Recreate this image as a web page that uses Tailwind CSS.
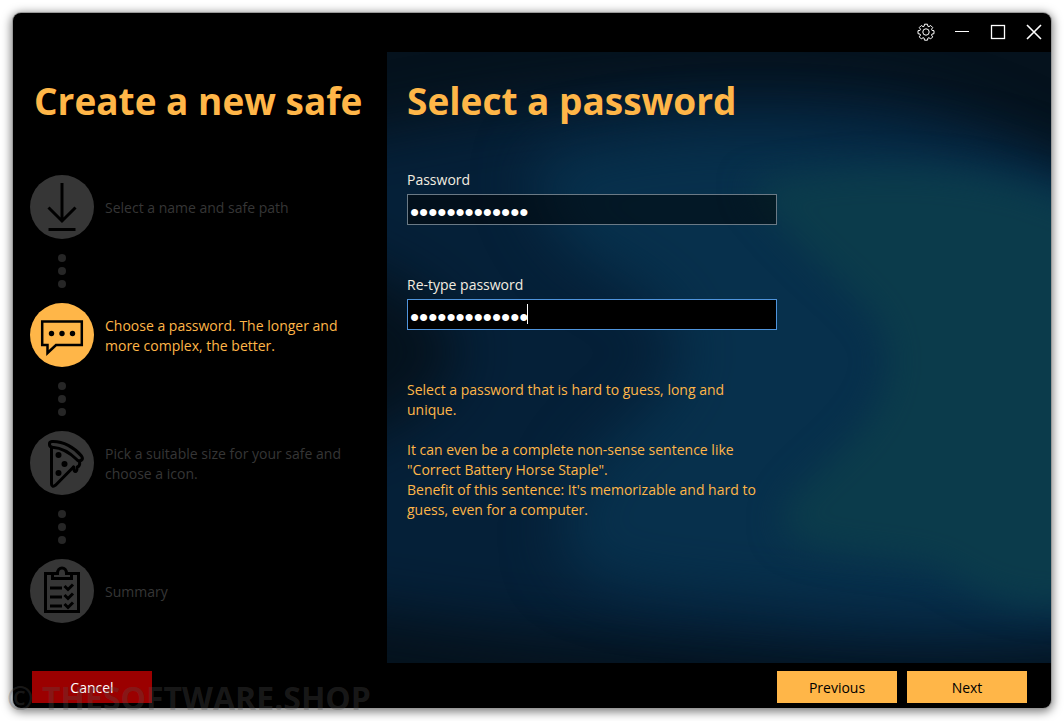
<!DOCTYPE html>
<html lang="en">
<head>
  <meta charset="UTF-8" />
  <meta name="viewport" content="width=device-width, initial-scale=1.0" />
  <title>Create a new safe</title>
  <script src="https://cdn.jsdelivr.net/npm/@tailwindcss/browser@4"></script>
</head>
<body class="bg-white p-[13px] min-h-screen flex font-['Segoe_UI','Open_Sans',sans-serif] text-[14px] leading-5">
  <div class="relative flex-1 flex flex-col bg-black rounded-lg shadow-[0_0_0_1px_#999,0_2px_10px_2px_rgba(0,0,0,0.5)]">

    <!-- Title bar -->
    <header class="h-[39px] flex items-center justify-end gap-4 pr-[7px] pb-[2px] text-white">
      <button type="button" aria-label="Settings" class="w-5 h-5 flex items-center justify-center">
        <svg class="w-[18px] h-[18px]" viewBox="0 0 18 18" fill="none" stroke="currentColor" stroke-width="1" stroke-linejoin="round">
          <path d="M7.5 1.2h3l.4 2.1 1 .4 1.800-1.200 2 2-1.200 1.800.4 1 2.100.4v3l-2.100.4-.4 1 1.200 1.800-2 2-1.800-1.200-1 .4-.4 2.100h-3l-.4-2.100-1-.4-1.800 1.200-2-2 1.200-1.800-.4-1L1 10.700v-3l2.100-.4.4-1-1.200-1.800 2-2 1.800 1.200 1-.4z" />
          <circle cx="9" cy="9" r="3.200" />
        </svg>
      </button>
      <button type="button" aria-label="Minimize" class="w-5 h-5 flex items-center justify-center">
        <svg class="w-4 h-4" viewBox="0 0 16 16" stroke="currentColor"><path d="M1 7.500h14" /></svg>
      </button>
      <button type="button" aria-label="Maximize" class="w-5 h-5 flex items-center justify-center">
        <svg class="w-4 h-4" viewBox="0 0 16 16" fill="none" stroke="currentColor" stroke-width="1.300"><rect x="1.500" y="1.500" width="13" height="13" /></svg>
      </button>
      <button type="button" aria-label="Close" class="w-5 h-5 flex items-center justify-center">
        <svg class="w-4 h-4" viewBox="0 0 16 16" stroke="currentColor" stroke-width="1.600"><path d="M1 1l14 14M15 1L1 15" /></svg>
      </button>
    </header>

    <div class="flex-1 flex">
      <!-- Steps -->
      <aside class="w-[374px] shrink-0 text-[#363636] pt-[22px]">
        <h1 class="pl-[21px] text-[37px] leading-[54px] font-bold text-[#ffb648] whitespace-nowrap">Create a new safe</h1>
        <ol class="mt-[47px] pl-[17px] pr-5">
          <li>
            <div class="flex items-center gap-[11px]">
              <svg class="w-16 h-16 shrink-0" viewBox="0 0 64 64" fill="none" stroke="#000" stroke-width="3">
                <circle cx="32" cy="32" r="32" fill="#363636" stroke="none" />
                <path d="M32 8v38M18.500 32.500L32 46l13.500-13.500" />
                <path d="M18.500 54.500h27" />
              </svg>
              <p class="pt-[2px]">Select a name and safe path</p>
            </div>
            <div class="w-16 h-16 flex flex-col items-center justify-center gap-[5px]">
              <span class="w-2 h-2 rounded-full bg-[#262626]"></span>
              <span class="w-2 h-2 rounded-full bg-[#262626]"></span>
              <span class="w-2 h-2 rounded-full bg-[#262626]"></span>
            </div>
          </li>
          <li aria-current="step">
            <div class="flex items-center gap-[11px] text-[#ffb648]">
              <svg class="w-16 h-16 shrink-0" viewBox="0 0 64 64" fill="none" stroke="#000" stroke-width="2.500">
                <circle cx="32" cy="32" r="32" fill="#ffb648" stroke="none" />
                <path d="M12.200 18.500h39.600V42H26l-8.500 8V42h-5.300z" />
                <g fill="#000" stroke="none"><circle cx="21.500" cy="30.500" r="2.700" /><circle cx="32" cy="30.500" r="2.700" /><circle cx="42.500" cy="30.500" r="2.700" /></g>
              </svg>
              <p class="pt-[2px]">Choose a password. The longer and more complex, the better.</p>
            </div>
            <div class="w-16 h-16 flex flex-col items-center justify-center gap-[5px]">
              <span class="w-2 h-2 rounded-full bg-[#262626]"></span>
              <span class="w-2 h-2 rounded-full bg-[#262626]"></span>
              <span class="w-2 h-2 rounded-full bg-[#262626]"></span>
            </div>
          </li>
          <li>
            <div class="flex items-center gap-[11px]">
              <svg class="w-16 h-16 shrink-0" viewBox="0 0 64 64" fill="none" stroke="#000" stroke-width="3" stroke-linejoin="round" stroke-linecap="round">
                <circle cx="32" cy="32" r="32" fill="#363636" stroke="none" />
                <path d="M22 10.500c11-.5 22.500 6 29.500 14.500 2.500 3.500-1.500 6.500-4.500 3.800-7-7-15.500-11.800-24.500-12.500-4-.5-4-5.500-.5-5.800z" />
                <path d="M21.500 16.500V53c0 2.500 2 3 4 1.200L43.500 36" />
                <path d="M43.500 36c.3 3 .2 4.500 1.800 4.500 1.700 0 1.800-2.500 1.800-4.500 2.500-.5 3-2.500 2.400-6" />
                <g fill="#000" stroke="none"><circle cx="28.500" cy="24" r="3" /><circle cx="34.500" cy="33" r="3" /><circle cx="28.500" cy="42" r="3" /></g>
              </svg>
              <p class="pt-[2px]">Pick a suitable size for your safe and choose a icon.</p>
            </div>
            <div class="w-16 h-16 flex flex-col items-center justify-center gap-[5px]">
              <span class="w-2 h-2 rounded-full bg-[#262626]"></span>
              <span class="w-2 h-2 rounded-full bg-[#262626]"></span>
              <span class="w-2 h-2 rounded-full bg-[#262626]"></span>
            </div>
          </li>
          <li>
            <div class="flex items-center gap-[11px]">
              <svg class="w-16 h-16 shrink-0" viewBox="0 0 64 64" fill="none" stroke="#000" stroke-width="3">
                <circle cx="32" cy="32" r="32" fill="#363636" stroke="none" />
                <path d="M24 14.500h-8.500v38h33v-38H40" />
                <path d="M22.500 19.500v-5h5c0-7.500 9-7.500 9 0h5v5z" />
                <path d="M20 29h12M20 38h12M20 47h12" />
                <path d="M34.500 27l3.500 3.500 5-5M34.500 36l3.500 3.500 5-5M34.500 45l3.500 3.500 5-5" />
              </svg>
              <p class="pt-[2px]">Summary</p>
            </div>
          </li>
        </ol>
      </aside>

      <!-- Password form -->
      <main class="relative isolate flex-1 bg-[#05121d] pt-[22px] px-5 overflow-hidden">
        <svg class="absolute inset-0 -z-10 w-full h-full" viewBox="0 0 664 611" preserveAspectRatio="none" aria-hidden="true">
          <defs>
            <filter id="soft" x="-30%" y="-30%" width="160%" height="160%" color-interpolation-filters="sRGB"><feGaussianBlur stdDeviation="28" /></filter>
            <filter id="mid" x="-30%" y="-30%" width="160%" height="160%" color-interpolation-filters="sRGB"><feGaussianBlur stdDeviation="16" /></filter>
          </defs>
          <path filter="url(#soft)" fill="#052038" d="M-60 90C80 60 240 35 400 38S620 80 740 150V590C640 605 540 610 400 600S120 580-60 550V400C20 370 70 340 70 300S20 230-60 200z" />
          <path filter="url(#soft)" fill="#07304c" d="M160 105C300 62 520 62 740 150V560C600 580 440 560 300 545S160 500 190 430C220 370 300 350 290 290S190 220 170 180 130 120 160 105z" />
          <path filter="url(#mid)" fill="#0b3b4b" d="M360 132C440 118 600 90 740 180V545C640 570 590 540 560 520S385 510 395 465C410 420 490 390 500 320S440 240 360 132z" />
        </svg>

        <h2 class="text-[37px] leading-[54px] font-bold text-[#ffb648]">Select a password</h2>
        <form id="passwordForm" class="mt-[42px] max-w-[370px]">
          <label for="password" class="block text-[#f3ede0]">Password</label>
          <input type="password" id="password" name="password" value="correcthorse1" class="mt-1 block w-full h-[31px] px-[2px] pt-[6px] border border-[#6b7a86] bg-black/50 text-white font-['Liberation_Sans',sans-serif] text-[26px] focus:outline-none" />

          <label for="retype" class="mt-[50px] block text-[#f3ede0]">Re-type password</label>
          <div class="relative mt-1">
            <input type="password" id="retype" name="retype" value="correcthorse1" class="block w-full h-[31px] px-[2px] pt-[6px] border border-[#4f94dc] bg-black text-white font-['Liberation_Sans',sans-serif] text-[26px] focus:outline-none" />
            <span class="absolute left-[120px] top-[5px] w-px h-5 bg-white"></span>
          </div>

          <p class="mt-[50px] text-[#ffb648]">Select a password that is hard to guess, long and unique.<br /><br />It can even be a complete non-sense sentence like "Correct Battery Horse Staple".<br />Benefit of this sentence: It's memorizable and hard to guess, even for a computer.</p>
        </form>
      </main>
    </div>

    <footer class="h-[45px] flex items-center gap-[10px] pt-[3px] pb-[1px] pl-[19px] pr-6">
      <button type="button" class="w-[120px] h-8 pt-[2px] mr-auto bg-[#9b0000] text-white">Cancel</button>
      <button type="button" class="w-[120px] h-8 pt-[2px] bg-[#ffb648] text-black">Previous</button>
      <button type="submit" form="passwordForm" class="w-[120px] h-8 pt-[2px] bg-[#ffb648] text-black">Next</button>
    </footer>

    <!-- Watermark -->
    <div class="absolute -left-[6px] -bottom-2 text-[32px] leading-9 font-bold text-[#555]/30 whitespace-nowrap pointer-events-none">© THESOFTWARE.SHOP</div>
  </div>
</body>
</html>
